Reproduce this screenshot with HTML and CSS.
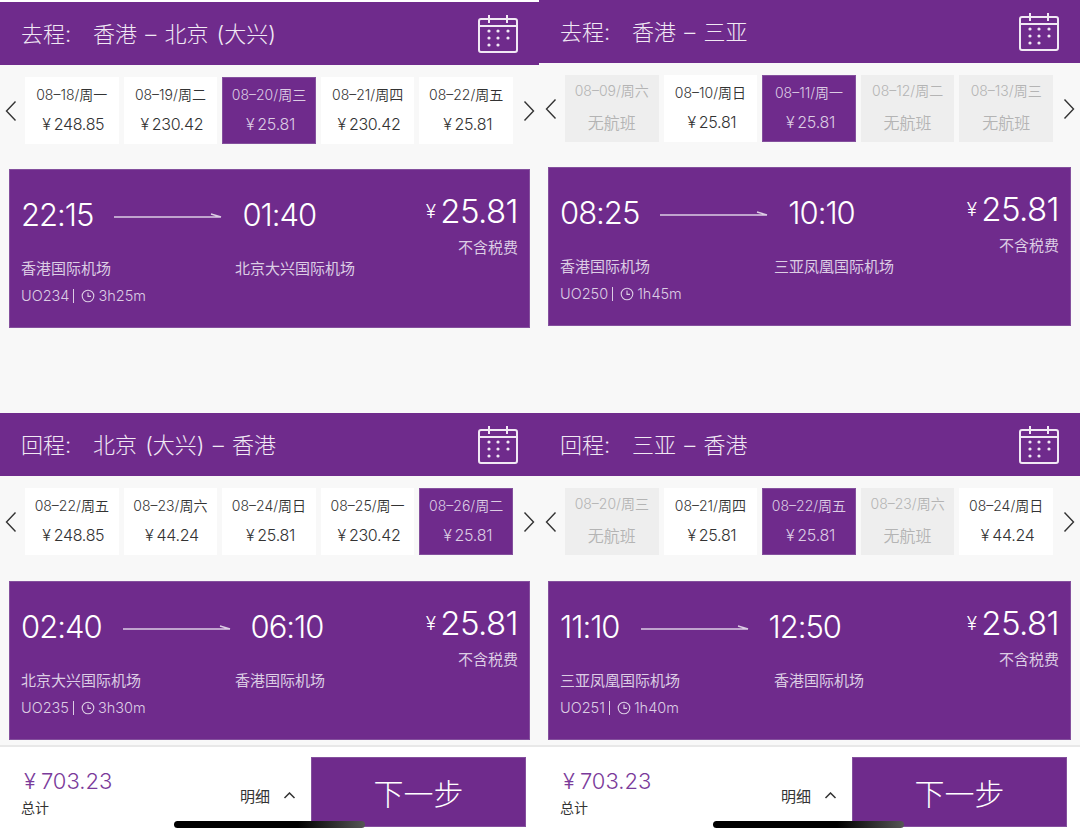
FILE: index.html
```html
<!DOCTYPE html>
<html lang="zh-CN">
<head>
    <meta charset="UTF-8">
    <meta name="viewport" content="width=device-width, initial-scale=1.0">
    <title>选择航班</title>
    <link rel="stylesheet" href="styles.css">
</head>
<body>
    <svg class="sprite" width="0" height="0">
        <symbol id="calendar" viewBox="0 0 40 38">
            <rect x="1" y="4" width="38" height="33" rx="2" fill="none" stroke="currentColor" stroke-width="2"/>
            <path d="M1 11H39M11 0V8M29 0V8" fill="none" stroke="currentColor" stroke-width="2"/>
            <g fill="currentColor">
                <circle cx="11" cy="16" r="1.6"/><circle cx="20" cy="16" r="1.6"/><circle cx="30" cy="16" r="1.6"/>
                <circle cx="11" cy="23" r="1.6"/><circle cx="20" cy="23" r="1.6"/><circle cx="30" cy="23" r="1.6"/>
                <circle cx="11" cy="30" r="1.6"/><circle cx="20" cy="30" r="1.6"/>
            </g>
        </symbol>
        <symbol id="chev-left" viewBox="0 0 12 22">
            <path d="M10.5 1.5L1.5 11L10.5 20.5" fill="none" stroke="currentColor" stroke-width="1.4"/>
        </symbol>
        <symbol id="chev-right" viewBox="0 0 12 22">
            <path d="M1.5 1.5L10.5 11L1.5 20.5" fill="none" stroke="currentColor" stroke-width="1.4"/>
        </symbol>
        <symbol id="arrow" viewBox="0 0 108 6">
            <path d="M0 4H107L97 1" fill="none" stroke="currentColor" stroke-width="1.4"/>
        </symbol>
        <symbol id="clock" viewBox="0 0 14 14">
            <circle cx="7" cy="7" r="5.8" fill="none" stroke="currentColor" stroke-width="1.1"/>
            <path d="M7 3.4V7.4H10" fill="none" stroke="currentColor" stroke-width="1.1"/>
        </symbol>
        <symbol id="chev-up" viewBox="0 0 12 7">
            <path d="M1 6L6 1L11 6" fill="none" stroke="currentColor" stroke-width="1.5"/>
        </symbol>
    </svg>

    <div class="page">
        <!-- 北京 -->
        <div class="column column-left">
            <section class="leg leg-first">
                <header class="leg-head">
                    <h2><span class="leg-label">去程:</span>香港 – 北京 (大兴)</h2>
                    <svg class="icon-calendar"><use href="#calendar"/></svg>
                </header>
                <div class="dates">
                    <svg class="chev"><use href="#chev-left"/></svg>
                    <div class="date"><span>08–18/周一</span><b><i>¥</i>248.85</b></div>
                    <div class="date"><span>08–19/周二</span><b><i>¥</i>230.42</b></div>
                    <div class="date selected"><span>08–20/周三</span><b><i>¥</i>25.81</b></div>
                    <div class="date"><span>08–21/周四</span><b><i>¥</i>230.42</b></div>
                    <div class="date"><span>08–22/周五</span><b><i>¥</i>25.81</b></div>
                    <svg class="chev"><use href="#chev-right"/></svg>
                </div>
                <div class="flight">
                    <div class="flight-top">
                        <div class="times">
                            <span class="time">22:15</span>
                            <svg class="icon-arrow"><use href="#arrow"/></svg>
                            <span class="time">01:40</span>
                        </div>
                        <div class="fare">
                            <div class="fare-price"><i>¥</i>25.81</div>
                            <div class="fare-note">不含税费</div>
                        </div>
                    </div>
                    <div class="airports"><span>香港国际机场</span><span>北京大兴国际机场</span></div>
                    <div class="flight-meta">UO234<em></em><svg class="icon-clock"><use href="#clock"/></svg>3h25m</div>
                </div>
            </section>

            <section class="leg">
                <header class="leg-head">
                    <h2><span class="leg-label">回程:</span>北京 (大兴) – 香港</h2>
                    <svg class="icon-calendar"><use href="#calendar"/></svg>
                </header>
                <div class="dates">
                    <svg class="chev"><use href="#chev-left"/></svg>
                    <div class="date"><span>08–22/周五</span><b><i>¥</i>248.85</b></div>
                    <div class="date"><span>08–23/周六</span><b><i>¥</i>44.24</b></div>
                    <div class="date"><span>08–24/周日</span><b><i>¥</i>25.81</b></div>
                    <div class="date"><span>08–25/周一</span><b><i>¥</i>230.42</b></div>
                    <div class="date selected"><span>08–26/周二</span><b><i>¥</i>25.81</b></div>
                    <svg class="chev"><use href="#chev-right"/></svg>
                </div>
                <div class="flight">
                    <div class="flight-top">
                        <div class="times">
                            <span class="time">02:40</span>
                            <svg class="icon-arrow"><use href="#arrow"/></svg>
                            <span class="time">06:10</span>
                        </div>
                        <div class="fare">
                            <div class="fare-price"><i>¥</i>25.81</div>
                            <div class="fare-note">不含税费</div>
                        </div>
                    </div>
                    <div class="airports"><span>北京大兴国际机场</span><span>香港国际机场</span></div>
                    <div class="flight-meta">UO235<em></em><svg class="icon-clock"><use href="#clock"/></svg>3h30m</div>
                </div>
            </section>

            <footer class="summary">
                <div class="total">
                    <div class="total-price"><i>¥</i>703.23</div>
                    <div class="total-label">总计</div>
                </div>
                <div class="details">明细<svg class="icon-up"><use href="#chev-up"/></svg></div>
                <button class="next" type="button">下一步</button>
                <div class="home-bar"></div>
            </footer>
        </div>

        <!-- 三亚 -->
        <div class="column column-right">
            <section class="leg leg-first">
                <header class="leg-head">
                    <h2><span class="leg-label">去程:</span>香港 – 三亚</h2>
                    <svg class="icon-calendar"><use href="#calendar"/></svg>
                </header>
                <div class="dates">
                    <svg class="chev"><use href="#chev-left"/></svg>
                    <div class="date empty"><span>08–09/周六</span><b>无航班</b></div>
                    <div class="date"><span>08–10/周日</span><b><i>¥</i>25.81</b></div>
                    <div class="date selected"><span>08–11/周一</span><b><i>¥</i>25.81</b></div>
                    <div class="date empty"><span>08–12/周二</span><b>无航班</b></div>
                    <div class="date empty"><span>08–13/周三</span><b>无航班</b></div>
                    <svg class="chev"><use href="#chev-right"/></svg>
                </div>
                <div class="flight">
                    <div class="flight-top">
                        <div class="times">
                            <span class="time">08:25</span>
                            <svg class="icon-arrow"><use href="#arrow"/></svg>
                            <span class="time">10:10</span>
                        </div>
                        <div class="fare">
                            <div class="fare-price"><i>¥</i>25.81</div>
                            <div class="fare-note">不含税费</div>
                        </div>
                    </div>
                    <div class="airports"><span>香港国际机场</span><span>三亚凤凰国际机场</span></div>
                    <div class="flight-meta">UO250<em></em><svg class="icon-clock"><use href="#clock"/></svg>1h45m</div>
                </div>
            </section>

            <section class="leg">
                <header class="leg-head">
                    <h2><span class="leg-label">回程:</span>三亚 – 香港</h2>
                    <svg class="icon-calendar"><use href="#calendar"/></svg>
                </header>
                <div class="dates">
                    <svg class="chev"><use href="#chev-left"/></svg>
                    <div class="date empty"><span>08–20/周三</span><b>无航班</b></div>
                    <div class="date"><span>08–21/周四</span><b><i>¥</i>25.81</b></div>
                    <div class="date selected"><span>08–22/周五</span><b><i>¥</i>25.81</b></div>
                    <div class="date empty"><span>08–23/周六</span><b>无航班</b></div>
                    <div class="date"><span>08–24/周日</span><b><i>¥</i>44.24</b></div>
                    <svg class="chev"><use href="#chev-right"/></svg>
                </div>
                <div class="flight">
                    <div class="flight-top">
                        <div class="times">
                            <span class="time">11:10</span>
                            <svg class="icon-arrow"><use href="#arrow"/></svg>
                            <span class="time">12:50</span>
                        </div>
                        <div class="fare">
                            <div class="fare-price"><i>¥</i>25.81</div>
                            <div class="fare-note">不含税费</div>
                        </div>
                    </div>
                    <div class="airports"><span>三亚凤凰国际机场</span><span>香港国际机场</span></div>
                    <div class="flight-meta">UO251<em></em><svg class="icon-clock"><use href="#clock"/></svg>1h40m</div>
                </div>
            </section>

            <footer class="summary">
                <div class="total">
                    <div class="total-price"><i>¥</i>703.23</div>
                    <div class="total-label">总计</div>
                </div>
                <div class="details">明细<svg class="icon-up"><use href="#chev-up"/></svg></div>
                <button class="next" type="button">下一步</button>
                <div class="home-bar"></div>
            </footer>
        </div>
    </div>
</body>
</html>
```

FILE: styles.css
```css
/* General Reset */
* {
    margin: 0;
    padding: 0;
    box-sizing: border-box;
}

body {
    font-family: Inter, 'Noto Sans CJK SC', sans-serif;
    background: #f8f8f8;
    color: #333;
    overflow: hidden;
}

i, em {
    font-style: normal;
}

.sprite {
    position: absolute;
}

.page {
    display: flex;
    width: 1080px;
    height: 839px;
}

.column {
    display: flex;
    flex-direction: column;
}

.column-left {
    width: 539px;
}

.column-right {
    width: 541px;
}

.leg {
    height: 327px;
}

.leg-first {
    height: 413px;
}

.column-left .leg-first {
    border-top: 2px solid #fff;
}

/* Purple title bar */
.leg-head {
    display: flex;
    align-items: center;
    justify-content: space-between;
    height: 63px;
    padding: 0 21px;
    background: #6f2b8c;
    color: #f1e9f4;
}

.leg-head h2 {
    margin-top: -4px;
    font-size: 22px;
    font-weight: 300;
    word-spacing: 2px;
}

.leg-label {
    display: inline-block;
    width: 72px;
}

.icon-calendar {
    width: 40px;
    height: 38px;
}

/* Date strip */
.dates {
    display: flex;
    align-items: center;
    height: 79px;
    padding-top: 12px;
}

.column-right .dates {
    padding-left: 1px;
}

.chev {
    flex-shrink: 0;
    width: 12px;
    height: 22px;
    margin: 0 8px 0 5px;
    color: #333;
}

.date + .chev {
    margin: 0 0 0 10px;
}

.date {
    display: flex;
    flex-direction: column;
    align-items: center;
    justify-content: center;
    flex-shrink: 0;
    gap: 10px;
    width: 93.6px;
    height: 67px;
    padding-bottom: 3px;
    background: #fff;
    font-size: 14px;
    font-weight: 350;
}

.date + .date {
    margin-left: 5px;
}

.date b {
    padding-left: 3px;
    font-size: 16px;
    font-weight: 350;
    letter-spacing: -0.3px;
}

.date i {
    margin-right: 3px;
}

.date.selected {
    background: #6f2b8c;
    color: #dccde4;
    box-shadow: inset 0 0 0 1px #84509d;
}

.date.empty {
    background: #eee;
    color: #b4b4b4;
}

.date.empty b {
    padding-left: 0;
    letter-spacing: 0;
}

/* Flight card */
.flight {
    height: 159px;
    margin: 25px 9px 0;
    padding: 24px 12px 0;
    background: #6f2b8c;
    color: #dccde4;
    box-shadow: inset 0 0 0 1px #84509d;
}

.leg:not(.leg-first) .flight {
    margin-top: 26px;
}

.flight-top {
    display: flex;
    justify-content: space-between;
    height: 64px;
}

.times {
    display: flex;
    align-items: center;
    gap: 20px;
    height: 42px;
}

.time {
    font-size: 31px;
    font-weight: 300;
    letter-spacing: -1px;
    color: #fff;
}

.icon-arrow {
    width: 108px;
    height: 6px;
    margin: 4px 0 0 1px;
}

.fare {
    text-align: right;
}

.fare-price {
    font-size: 33px;
    font-weight: 300;
    line-height: 36px;
    letter-spacing: -0.6px;
    color: #fff;
}

.fare-price i {
    font-size: 19px;
    margin-right: 5px;
    vertical-align: 5px;
}

.fare-note {
    margin-top: 6px;
    font-size: 15px;
}

.airports {
    display: flex;
    font-size: 15px;
}

.airports span:first-child {
    width: 214px;
}

.flight-meta {
    display: flex;
    align-items: center;
    margin-top: 9px;
    font-size: 14.5px;
    font-weight: 300;
}

.flight-meta em {
    width: 1px;
    height: 14px;
    margin: 0 7px 0 4px;
    background: #dccde4;
}

.icon-clock {
    width: 14px;
    height: 14px;
    margin-right: 3px;
}

/* Bottom bar */
.summary {
    position: relative;
    display: flex;
    flex: 1;
    align-items: flex-start;
    margin-top: 5px;
    padding: 10px 13px 0 21px;
    background: #fff;
    border-top: 2px solid #e8e8e8;
}

.total {
    padding-top: 11px;
}

.total-price {
    padding-left: 3px;
    font-size: 22px;
    font-weight: 300;
    color: #7a3a9a;
}

.total-price i {
    margin-right: 5px;
}

.total-label {
    margin-top: 3px;
    font-size: 14px;
}

.details {
    display: flex;
    align-items: center;
    gap: 13px;
    margin: 28px 15px 0 auto;
    font-size: 15px;
}

.icon-up {
    width: 13px;
    height: 7px;
}

.next {
    width: 215px;
    height: 70px;
    border: none;
    background: #6f2b8c;
    box-shadow: inset 0 0 0 1px #84509d;
    color: #fff;
    font-family: inherit;
    font-size: 30px;
    font-weight: 300;
}

.home-bar {
    position: absolute;
    left: 174px;
    bottom: 11px;
    width: 191px;
    height: 7px;
    border-radius: 4px;
    background: linear-gradient(to right, #000 65%, #555);
}
```
